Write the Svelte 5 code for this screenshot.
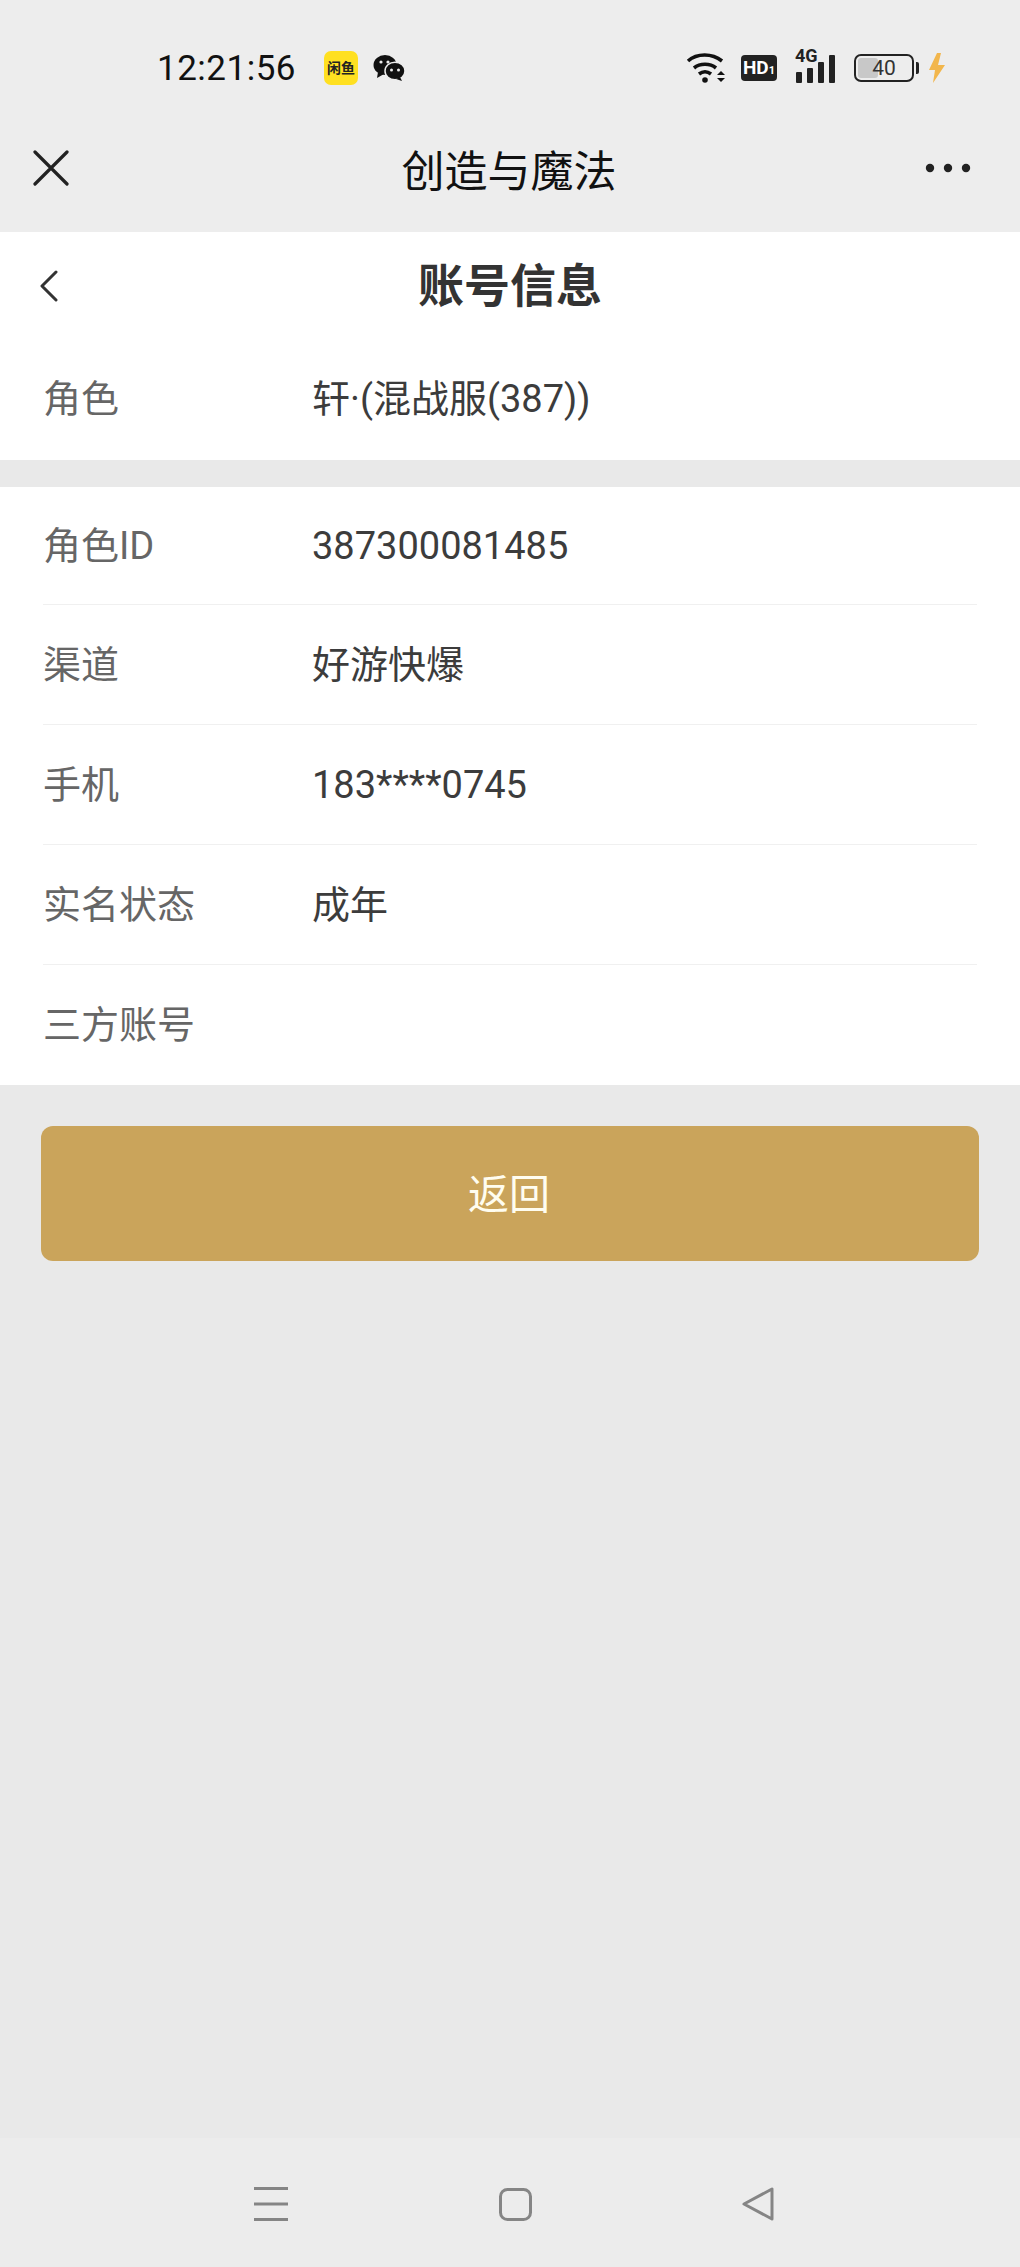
<script lang="ts">
const firstRows = [{ label: '角色', value: '轩·(混战服(387))' }];
const rows = [
    { label: '角色ID', value: '387300081485' },
    { label: '渠道', value: '好游快爆' },
    { label: '手机', value: '183****0745' },
    { label: '实名状态', value: '成年' },
    { label: '三方账号', value: '' }
];
</script>

<div class="phone">
    <div class="status">
        <span class="time">12:21:56</span>
        <span class="fish"><span>闲鱼</span></span>
        <svg class="wechat" width="32" height="28" viewBox="0 0 32 28">
            <ellipse cx="12" cy="11" rx="11.5" ry="10" fill="#111" />
            <path d="M5 18l-1 6 7-4z" fill="#111" />
            <ellipse cx="22" cy="17" rx="10" ry="8.8" fill="#111" stroke="#ededed" stroke-width="1.5" />
            <path d="M27 23l2 4-6-2z" fill="#111" />
            <circle cx="8" cy="8" r="1.6" fill="#ededed" />
            <circle cx="15" cy="8" r="1.6" fill="#ededed" />
            <circle cx="18.5" cy="16" r="1.5" fill="#ededed" />
            <circle cx="25.5" cy="16" r="1.5" fill="#ededed" />
        </svg>
        <span class="spacer"></span>
        <svg class="wifi" width="42" height="34" viewBox="0 0 42 34" fill="none" stroke="#111" stroke-width="3.6">
            <path d="M2 10C11 2 26 2 36 10" />
            <path d="M8 17c6-5 16-5 22 0" />
            <path d="M13 23c4-3 8-3 12 0" />
            <circle cx="19" cy="29" r="2.8" fill="#111" stroke="none" />
            <path d="M31 24l4-4 4 4zM31 27l4 4 4-4z" fill="#111" stroke="none" />
        </svg>
        <span class="hd">HD<small>1</small></span>
        <span class="signal">
            <span class="g4">4G</span>
            <i style="height: 11px"></i>
            <i style="height: 15px"></i>
            <i style="height: 21px"></i>
            <i style="height: 28px"></i>
        </span>
        <span class="battery"><span class="level"></span><span class="pct">40</span></span>
        <span class="nub"></span>
        <svg class="bolt" width="18" height="30" viewBox="0 0 18 30">
            <path d="M9 0L1 17h6l-2 13 12-18h-7l3-12z" fill="#f2b64c" />
        </svg>
    </div>

    <div class="nav">
        <svg width="36" height="36" viewBox="0 0 36 36" stroke="#222" stroke-width="3.2" stroke-linecap="round">
            <path d="M2 2l32 32M34 2L2 34" />
        </svg>
        <span class="nav-title">创造与魔法</span>
        <svg width="48" height="12" viewBox="0 0 48 12" fill="#222">
            <circle cx="6" cy="6" r="4.2" /><circle cx="24" cy="6" r="4.2" /><circle cx="42" cy="6" r="4.2" />
        </svg>
    </div>

    <div class="panel">
        <div class="head">
            <svg class="back" width="18" height="32" viewBox="0 0 18 32" fill="none" stroke="#333" stroke-width="3" stroke-linecap="round" stroke-linejoin="round">
                <path d="M16 2L2 16l14 14" />
            </svg>
            <span class="head-title">账号信息</span>
        </div>
        {#each firstRows as row}
            <div class="row first">
                <span class="label">{row.label}</span>
                <span class="value">{row.value}</span>
            </div>
        {/each}
    </div>

    <div class="panel list">
        {#each rows as row}
            <div class="row">
                <span class="label">{row.label}</span>
                <span class="value">{row.value}</span>
            </div>
        {/each}
    </div>

    <div class="actions">
        <button type="button" class="back-btn">返回</button>
    </div>

    <div class="syskeys">
        <svg width="34" height="36" viewBox="0 0 34 36" stroke="#858585" stroke-width="3">
            <path d="M0 2.5h34M0 18h34M0 33.5h34" />
        </svg>
        <svg width="33" height="33" viewBox="0 0 33 33" fill="none" stroke="#858585" stroke-width="3">
            <rect x="1.5" y="1.5" width="30" height="30" rx="7" />
        </svg>
        <svg width="32" height="34" viewBox="0 0 32 34" fill="none" stroke="#858585" stroke-width="3" stroke-linejoin="round">
            <path d="M2 17L30 2v30z" />
        </svg>
    </div>
</div>

<style>
:global(body) {
    margin: 0;
    background: #e9e9e9;
}

.phone {
    width: 1020px;
    height: 2267px;
    display: flex;
    flex-direction: column;
    background: #e9e9e9;
    font-family: Roboto, "Noto Sans CJK SC", sans-serif;
}

.status {
    height: 120px;
    box-sizing: border-box;
    padding: 16px 74px 0 157px;
    display: flex;
    align-items: center;
    background: #ededed;
    color: #111;
}

.time {
    font-size: 35px;
    letter-spacing: 0.5px;
}

.fish {
    width: 34px;
    height: 34px;
    margin-left: 28px;
    border-radius: 7px;
    background: #ffe021;
    display: flex;
    align-items: center;
    justify-content: center;
}

.fish span {
    font-size: 14px;
    font-weight: 700;
    line-height: 1;
    white-space: nowrap;
    color: #222;
}

.wechat {
    margin-left: 15px;
}

.spacer {
    flex: 1;
}

.hd {
    margin-left: 13px;
    width: 36px;
    height: 26px;
    border-radius: 4px;
    background: #222;
    color: #fff;
    font-size: 19px;
    font-weight: 700;
    line-height: 26px;
    text-align: center;
    white-space: nowrap;
}

.hd small {
    font-size: 11px;
}

.signal {
    position: relative;
    margin-left: 19px;
    width: 42px;
    height: 30px;
    display: flex;
    align-items: flex-end;
    gap: 5px;
}

.signal i {
    width: 6px;
    background: #222;
    border-radius: 1px;
}

.g4 {
    position: absolute;
    left: -1px;
    top: -6px;
    font-size: 18px;
    font-weight: 700;
    line-height: 1;
    color: #222;
}

.battery {
    position: relative;
    margin-left: 16px;
    width: 60px;
    height: 28px;
    box-sizing: border-box;
    border: 2px solid #222;
    border-radius: 7px;
    display: flex;
    align-items: center;
    justify-content: center;
    overflow: hidden;
}

.level {
    position: absolute;
    left: 2px;
    top: 2px;
    bottom: 2px;
    width: 20px;
    background: #c8c8c8;
    border-radius: 3px;
}

.pct {
    position: relative;
    font-size: 21px;
    color: #333;
}

.nub {
    width: 3px;
    height: 12px;
    margin-left: 2px;
    background: #222;
    border-radius: 0 2px 2px 0;
}

.bolt {
    margin-left: 9px;
}

.nav {
    height: 112px;
    box-sizing: border-box;
    padding: 0 48px 16px 33px;
    display: flex;
    align-items: center;
    justify-content: space-between;
    background: #ededed;
}

.nav-title {
    font-size: 43px;
    font-weight: 400;
    color: #111;
    margin-left: 25px;
}

.panel {
    background: #fff;
}

.head {
    position: relative;
    height: 107px;
    display: flex;
    align-items: center;
    justify-content: center;
}

.back {
    position: absolute;
    left: 40px;
    top: 38px;
}

.head-title {
    font-size: 46px;
    line-height: 60px;
    font-weight: 700;
    color: #333;
}

.list {
    margin-top: 27px;
    padding: 0 43px;
}

.row {
    height: 120px;
    display: flex;
    align-items: center;
    font-size: 38px;
    line-height: 50px;
    border-bottom: 1px solid #f0f0f0;
    box-sizing: border-box;
}

.row:first-child {
    height: 118px;
}

.row:last-child {
    border-bottom: 0;
}

.row.first {
    height: 121px;
    padding: 0 43px 2px;
    border-bottom: 0;
}

.label {
    width: 269px;
    flex: none;
    color: #666;
}

.value {
    color: #3c3c3c;
}

.actions {
    padding: 41px 41px 0;
}

.back-btn {
    display: block;
    width: 100%;
    height: 135px;
    padding: 0 2px 6px 0;
    border: 0;
    border-radius: 12px;
    background: #caa45b;
    color: #fffdf0;
    font-family: inherit;
    font-size: 41px;
}

.syskeys {
    margin-top: auto;
    height: 129px;
    box-sizing: border-box;
    padding: 3px 246px 0 254px;
    display: flex;
    align-items: center;
    justify-content: space-between;
    background: #ececec;
}
</style>
